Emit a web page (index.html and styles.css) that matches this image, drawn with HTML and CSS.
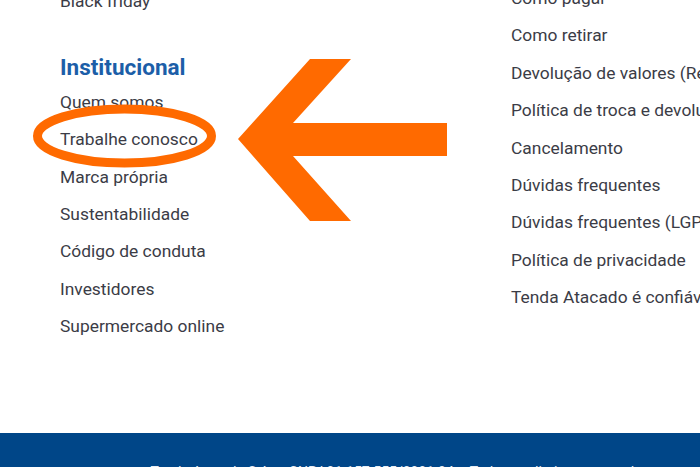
FILE: index.html
```html
<!DOCTYPE html>
<html lang="pt-BR">
<head>
<meta charset="utf-8">
<title>Tenda Atacado - Rodapé</title>
<link rel="stylesheet" href="styles.css">
</head>
<body>
<div class="page">
  <div class="links">
    <div class="col col-left">
      <ul class="list">
        <li>Black friday</li>
      </ul>
      <h3 class="heading">Institucional</h3>
      <ul class="list">
        <li>Quem somos</li>
        <li>Trabalhe conosco</li>
        <li>Marca própria</li>
        <li>Sustentabilidade</li>
        <li>Código de conduta</li>
        <li>Investidores</li>
        <li>Supermercado online</li>
      </ul>
    </div>
    <div class="col col-right">
      <ul class="list">
        <li>Como pagar</li>
        <li>Como retirar</li>
        <li>Devolução de valores (Reembolso)</li>
        <li>Política de troca e devolução</li>
        <li>Cancelamento</li>
        <li>Dúvidas frequentes</li>
        <li>Dúvidas frequentes (LGPD)</li>
        <li>Política de privacidade</li>
        <li>Tenda Atacado é confiável?</li>
      </ul>
    </div>
  </div>
  <footer class="bar">
    <p class="bar-text">Tenda Atacado S.A. – CNPJ 01.157.555/0001-04 – Todos os direitos reservados</p>
  </footer>
  <svg class="annotation" width="700" height="467" viewBox="0 0 700 467" aria-hidden="true">
    <ellipse cx="124.5" cy="136" rx="87" ry="27" fill="none" stroke="#ff6a00" stroke-width="9"/>
    <polygon points="238,139 310,59 351,59 293,123 447,123 447,156 293,156 351,221 310,221" fill="#ff6a00"/>
  </svg>
</div>
</body>
</html>
```
FILE: styles.css
```css
html, body {
  margin: 0;
  padding: 0;
  background: #ffffff;
}
body {
  width: 700px;
  height: 467px;
  overflow: hidden;
  font-family: Roboto, "Liberation Sans", Arial, sans-serif;
}
.page {
  position: relative;
  width: 700px;
  height: 467px;
  overflow: hidden;
}
.links {
  display: grid;
  grid-template-columns: 451px 189px;
  padding-left: 60px;
  padding-bottom: 87px;
}
.col {
  min-width: 0;
  white-space: nowrap;
}
.col-left {
  margin-top: -17px;
}
.col-right {
  margin-top: -20px;
}
.list {
  list-style: none;
  margin: 0;
  padding: 0;
}
.list li {
  font-size: 17.4px;
  line-height: 37.4px;
  color: #3b3c46;
}
.heading {
  margin: 33.5px 0 3.5px;
  font-size: 22.5px;
  line-height: 26.4px;
  font-weight: 700;
  color: #1c5ea8;
}
.bar {
  background: #004688;
  height: 60px;
  padding-top: 29px;
  box-sizing: border-box;
}
.bar-text {
  margin: 0;
  font-size: 14px;
  line-height: 20px;
  color: #e8eef6;
  text-align: center;
  white-space: nowrap;
  padding-left: 100px;
}
.annotation {
  position: absolute;
  left: 0;
  top: 0;
  pointer-events: none;
}
```
